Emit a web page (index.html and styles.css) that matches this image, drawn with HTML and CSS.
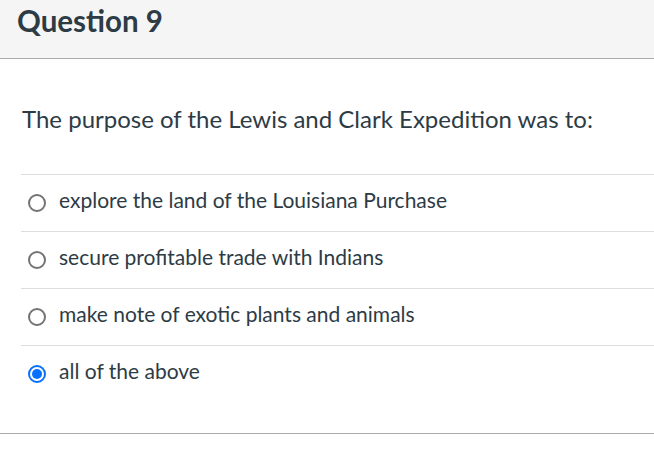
FILE: index.html
```html
<!DOCTYPE html>
<html>
<head>
<meta charset="utf-8">
<link rel="stylesheet" href="styles.css">
</head>
<body>
<div class="quiz">
  <div class="header"><h2 class="title">Question 9</h2></div>
  <div class="body">
    <p class="question">The purpose of the Lewis and Clark Expedition was to:</p>
    <div class="answers">
      <label class="answer"><span class="radio"></span><span class="label">explore the land of the Louisiana Purchase</span></label>
      <label class="answer"><span class="radio"></span><span class="label">secure profitable trade with Indians</span></label>
      <label class="answer"><span class="radio"></span><span class="label">make note of exotic plants and animals</span></label>
      <label class="answer"><span class="radio checked"></span><span class="label">all of the above</span></label>
    </div>
  </div>
  <div class="footer"></div>
</div>
</body>
</html>
```
FILE: styles.css
```css
html, body {
  margin: 0;
  padding: 0;
  background: #fff;
}
body {
  font-family: Lato, "Noto Sans", sans-serif;
  color: #2d3b45;
}
.header {
  background: #f5f5f5;
  height: 58px;
  border-bottom: 1px solid #aaaaaa;
  padding-left: 17px;
  display: flex;
  align-items: center;
}
.title {
  margin: 0;
  font-size: 29.5px;
  font-weight: 700;
  line-height: 1;
  position: relative;
  top: -8px;
}
.body {
  padding: 0 0 0 21px;
}
.question {
  margin: 0 0 46px 0;
  padding-top: 45px;
  padding-left: 1px;
  height: 69px;
  box-sizing: border-box;
  font-size: 24px;
  line-height: 30px;
}
.answers {
  display: flex;
  flex-direction: column;
}
.answer {
  display: flex;
  align-items: center;
  height: 56px;
  border-top: 1px solid #dddddd;
  padding-left: 7px;
  gap: 13px;
  font-size: 21px;
}
.radio {
  width: 14px;
  height: 14px;
  border: 2px solid #737373;
  border-radius: 50%;
  box-sizing: content-box;
  position: relative;
  flex: none;
}
.radio.checked {
  border-color: #0770ff;
}
.radio.checked::after {
  content: "";
  position: absolute;
  left: 2px;
  top: 2px;
  width: 10px;
  height: 10px;
  border-radius: 50%;
  background: #0770ff;
}
.label {
  line-height: 24px;
  position: relative;
  top: -3px;
}
.footer {
  margin-top: 31px;
  border-top: 1px solid #aaaaaa;
}
```
